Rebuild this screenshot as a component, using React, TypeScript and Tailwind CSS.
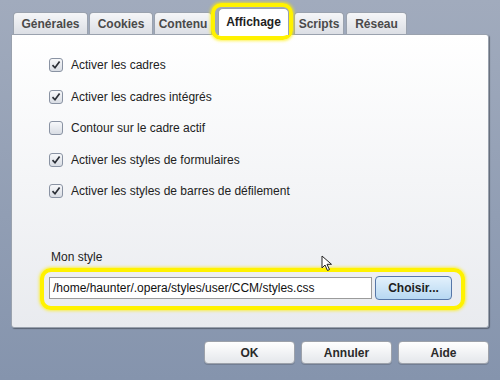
import React from 'react';

const font = { fontFamily: '"Liberation Sans", Arial, sans-serif' };

const tabs = [
  { label: 'Générales', w: 'w-[75px]', ml: 'ml-0' },
  { label: 'Cookies', w: 'w-[64px]', ml: 'ml-px' },
  { label: 'Contenu', w: 'w-[58px]', ml: 'ml-px' },
  { label: 'Affichage', w: 'w-[71px]', ml: 'ml-[6px]', active: true },
  { label: 'Scripts', w: 'w-[50px]', ml: 'ml-[5px]' },
  { label: 'Réseau', w: 'w-[61px]', ml: 'ml-[2px]' },
];

const options = [
  { label: 'Activer les cadres', checked: true },
  { label: 'Activer les cadres intégrés', checked: true },
  { label: 'Contour sur le cadre actif', checked: false },
  { label: 'Activer les styles de formulaires', checked: true },
  { label: 'Activer les styles de barres de défilement', checked: true },
];

function Checkbox({ checked }: { checked: boolean }) {
  return (
    <div className="w-[14px] h-[14px] rounded-[3px] border border-[#8a93a3] bg-gradient-to-b from-[#f7f8fa] to-[#d9dde4] flex items-center justify-center shrink-0">
      {checked && (
        <svg width="10" height="10" viewBox="0 0 10 10">
          <path d="M1.5 5.2 L4 7.8 L8.6 1.6" fill="none" stroke="#2b2f36" strokeWidth="1.7" />
        </svg>
      )}
    </div>
  );
}

function Button({ label }: { label: string }) {
  return (
    <div className="w-[91px] h-[23px] rounded-[4px] border border-[#9ca1aa] bg-gradient-to-b from-white to-[#e4e7eb] flex items-center justify-center text-[12px] font-semibold text-[#2a2a2a] shadow-[0_1px_0_rgba(0,0,0,0.15)]">
      {label}
    </div>
  );
}

export default function App() {
  return (
    <div
      className="relative w-[500px] h-[380px] overflow-hidden bg-gradient-to-b from-[#a1abbd] to-[#8594ad]"
      style={font}
    >
      {/* tab strip */}
      <div className="flex items-end h-[34px] pl-[13px]">
        {tabs.map((t) =>
          t.active ? (
            <div
              key={t.label}
              className={`${t.w} ${t.ml} h-[27px] -mb-px z-10 rounded-t-[5px] border border-b-0 border-[#9aa2ae] bg-white flex items-center justify-center text-[12px] font-semibold text-[#1e1e1e]`}
            >
              {t.label}
            </div>
          ) : (
            <div
              key={t.label}
              className={`${t.w} ${t.ml} h-[22px] rounded-t-[4px] border border-b-0 border-[#9aa2ae] bg-gradient-to-b from-[#f5f6f8] to-[#dcdfe5] flex items-center justify-center text-[12px] font-semibold text-[#4a4a4a]`}
            >
              {t.label}
            </div>
          )
        )}
      </div>

      {/* panel */}
      <div className="ml-[11px] w-[478px] h-[294px] rounded-b-[3px] rounded-tr-[3px] border border-[#9aa2ae] bg-gradient-to-b from-white to-[#e9ebef] shadow-[1px_1px_1px_rgba(0,0,0,0.35)] pl-[37px] pt-[23px]">
        <div className="flex flex-col gap-[17.5px]">
          {options.map((o) => (
            <div key={o.label} className="flex items-center gap-[8px] h-[14px]">
              <Checkbox checked={o.checked} />
              <span className="text-[12px] font-medium text-[#222]">{o.label}</span>
            </div>
          ))}
        </div>
        <div className="mt-[50px] ml-[2px] text-[12px] font-medium text-[#222]">Mon style</div>
        <div className="mt-[10px] flex items-center gap-[3px]">
          <div className="w-[323px] h-[22px] border border-[#9b9b9b] bg-white flex items-center pl-[3px] text-[12px] text-[#111]">
            /home/haunter/.opera/styles/user/CCM/styles.css
          </div>
          <div className="w-[77px] h-[24px] rounded-[4px] border border-[#5677a8] bg-gradient-to-b from-[#e3f1fc] to-[#b7d8f2] flex items-center justify-center text-[12px] font-semibold text-[#1e1e1e]">
            Choisir...
          </div>
        </div>
      </div>

      {/* bottom buttons */}
      <div className="flex justify-end gap-[6px] pr-[11px] mt-[13px]">
        <Button label="OK" />
        <Button label="Annuler" />
        <Button label="Aide" />
      </div>

      {/* yellow highlights */}
      <div className="absolute left-[211px] top-[3px] w-[82px] h-[37px] rounded-[10px] border-[4px] border-[#fff200] shadow-[0_0_3px_1px_rgba(255,240,0,0.7)]" />
      <div className="absolute left-[40px] top-[268px] w-[425px] h-[42px] rounded-[11px] border-[4px] border-[#fff200] shadow-[0_0_3px_1px_rgba(255,240,0,0.7)]" />

      {/* mouse cursor */}
      <svg className="absolute left-[321px] top-[255px]" width="12" height="18" viewBox="0 0 12 18">
        <path d="M1 1 L1 13 L4 10 L6.5 15.5 L8.5 14.6 L6 9.3 L10.5 9.3 Z" fill="white" stroke="#222" strokeWidth="1" />
      </svg>
    </div>
  );
}
